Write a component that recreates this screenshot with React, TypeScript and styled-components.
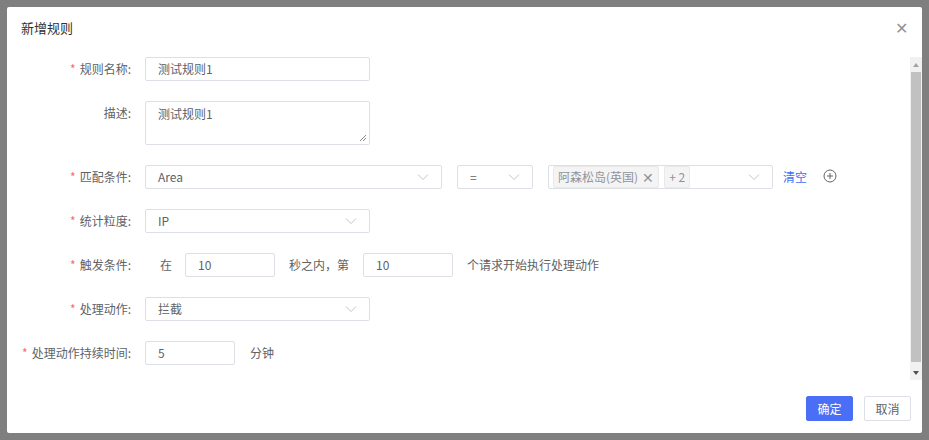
import React from "react";
import styled, { createGlobalStyle } from "styled-components";

const G = createGlobalStyle`
  html,body{margin:0;padding:0;background:#7f7f7f;font-family:"Noto Sans CJK SC","Liberation Sans",sans-serif;font-size:12px;color:#606266;}
`;
const Backdrop = styled.div`width:929px;height:440px;padding:7px;box-sizing:border-box;`;
const Dialog = styled.div`width:915px;height:426px;background:#fff;border-radius:2px;display:flex;flex-direction:column;`;
const Header = styled.div`height:40px;flex-shrink:0;display:flex;align-items:center;justify-content:space-between;padding:0 14px 0 14px;font-size:13px;color:#303133;`;
const Close = styled.span`font-size:16px;color:#909399;font-weight:300;`;
const Body = styled.div`display:flex;padding-top:10px;flex-shrink:0;`;
const Form = styled.div`flex:1;display:flex;flex-direction:column;gap:20px;padding-top:0;`;
const Row = styled.div<{ $h?: number }>`display:flex;align-items:flex-start;height:${p => p.$h ?? 24}px;`;
const Label = styled.div`width:124px;text-align:right;padding-right:14px;line-height:24px;color:#606266;white-space:nowrap;`;
const Star = styled.span`color:#f56c6c;margin-right:4px;`;
const Input = styled.div<{ $w: number }>`width:${p => p.$w}px;height:24px;box-sizing:border-box;border:1px solid #dcdfe6;border-radius:2px;padding:0 12px;line-height:22px;color:#606266;display:flex;align-items:center;justify-content:space-between;flex-shrink:0;`;
const Area = styled.div`width:225px;height:44px;box-sizing:border-box;border:1px solid #dcdfe6;border-radius:2px;padding:3px 12px;position:relative;`;
const Grip = styled.svg`position:absolute;right:2px;bottom:2px;`;
const Chev = () => (<svg width="12" height="8" viewBox="0 0 12 8"><path d="M1 1.5l5 5 5-5" fill="none" stroke="#c0c4cc" strokeWidth="1"/></svg>);
const Gap = styled.span<{ $w: number }>`width:${p => p.$w}px;flex-shrink:0;`;
const Text = styled.span`line-height:24px;white-space:nowrap;`;
const Tag = styled.span`background:#f4f4f5;border:1px solid #e9e9eb;border-radius:2px;height:20px;padding:0 4px;display:inline-flex;align-items:center;gap:4px;color:#909399;margin-right:5px;`;
const TagX = styled.span`font-size:14px;color:#909399;`;
const Multi = styled(Input)`padding:0 12px 0 4px;justify-content:flex-start;`;
const Push = styled.span`margin-left:auto;display:flex;`;
const Link = styled.span`color:#3f6ff5;line-height:24px;margin-left:10px;`;
const Plus = styled.svg`margin-left:16px;margin-top:4px;`;
const Scroll = styled.div`width:12px;height:323px;background:#f1f1f1;display:flex;flex-direction:column;align-items:center;`;
const Arrow = styled.div<{ $up?: boolean }>`height:15px;display:flex;align-items:center;justify-content:center;&::after{content:"";border-left:3px solid transparent;border-right:3px solid transparent;${p => p.$up ? "border-bottom:4px solid #a3a3a3;" : "border-top:4px solid #505050;"}}`;
const Thumb = styled.div`width:10px;flex:1;background:#c1c1c1;margin:0 0 3px;`;
const Footer = styled.div`flex:1;display:flex;justify-content:flex-end;align-items:flex-start;gap:11px;padding:16px 11px 0 0;`;
const Btn = styled.button<{ $primary?: boolean }>`width:47px;height:25px;border-radius:2px;font-size:12px;font-family:inherit;border:1px solid ${p => p.$primary ? "#4a6ef6" : "#dcdfe6"};background:${p => p.$primary ? "#4a6ef6" : "#fff"};color:${p => p.$primary ? "#fff" : "#606266"};`;

export default function App() {
  return (<><G /><Backdrop><Dialog>
    <Header><span>新增规则</span><Close>✕</Close></Header>
    <Body>
      <Form>
        <Row><Label><Star>*</Star>规则名称:</Label><Input $w={225}>测试规则1</Input></Row>
        <Row $h={44}><Label>描述:</Label><Area>测试规则1<Grip width="8" height="8" viewBox="0 0 8 8"><path d="M7 1L1 7M7 4L4 7" stroke="#888" strokeWidth="1"/></Grip></Area></Row>
        <Row><Label><Star>*</Star>匹配条件:</Label>
          <Input $w={297}>Area<Chev /></Input><Gap $w={15} />
          <Input $w={76}>=<Chev /></Input><Gap $w={15} />
          <Multi $w={225}><Tag>阿森松岛(英国)<TagX>✕</TagX></Tag><Tag>+ 2</Tag><Push><Chev /></Push></Multi>
          <Link>清空</Link>
          <Plus width="14" height="14" viewBox="0 0 14 14"><circle cx="7" cy="7" r="6" fill="none" stroke="#606266"/><path d="M7 4v6M4 7h6" stroke="#606266"/></Plus>
        </Row>
        <Row><Label><Star>*</Star>统计粒度:</Label><Input $w={225}>IP<Chev /></Input></Row>
        <Row><Label><Star>*</Star>触发条件:</Label><Gap $w={15} /><Text>在</Text><Gap $w={13} /><Input $w={90}>10</Input><Gap $w={14} /><Text>秒之内，第</Text><Gap $w={14} /><Input $w={90}>10</Input><Gap $w={14} /><Text>个请求开始执行处理动作</Text></Row>
        <Row><Label><Star>*</Star>处理动作:</Label><Input $w={225}>拦截<Chev /></Input></Row>
        <Row><Label><Star>*</Star>处理动作持续时间:</Label><Input $w={90}>5</Input><Gap $w={15} /><Text>分钟</Text></Row>
      </Form>
      <Scroll><Arrow $up /><Thumb /><Arrow /></Scroll>
    </Body>
    <Footer><Btn $primary>确定</Btn><Btn>取消</Btn></Footer>
  </Dialog></Backdrop></>);
}
